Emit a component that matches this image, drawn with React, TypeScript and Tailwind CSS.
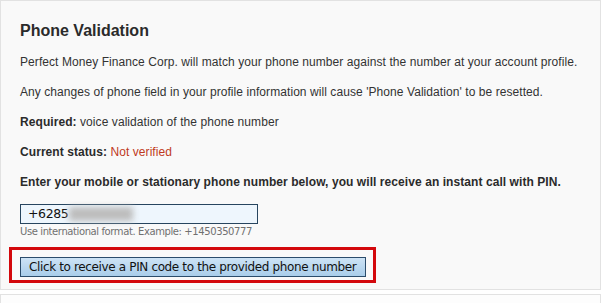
import React from "react";

export default function App() {
  return (
    <div className="w-[603px] h-[303px] bg-white overflow-hidden">
      <div className="w-[601px] h-[290px] bg-[#f9f9f9] border border-[#e2e2e2] pl-[19px] pt-[21px] font-['Liberation_Sans',Arial,sans-serif] text-[#333]">
        <h1 className="text-[16px] leading-[18px] font-bold text-[#2b2b2b]">Phone Validation</h1>
        <div className="mt-[15px] flex flex-col gap-[15px] text-[12px] leading-[15px] tracking-[0.07px]">
          <p>Perfect Money Finance Corp. will match your phone number against the number at your account profile.</p>
          <p>Any changes of phone field in your profile information will cause 'Phone Validation' to be resetted.</p>
          <p>
            <b className="text-[#2b2b2b]">Required:</b> voice validation of the phone number
          </p>
          <p>
            <b className="text-[#2b2b2b]">Current status:</b> <span className="text-[#c0391e]">Not verified</span>
          </p>
          <p className="font-bold text-[#2b2b2b]">
            Enter your mobile or stationary phone number below, you will receive an instant call with PIN.
          </p>
        </div>
        <div className="mt-[14px] w-[238px] h-[20px] border border-[#27455f] bg-[#eef6fd] flex items-center pl-[7px] font-['DejaVu_Sans',Tahoma,sans-serif] text-[12.5px] tracking-[-0.4px] text-[#111]">
          <span>+6285</span>
          <span className="ml-[1px] w-[64px] h-[14px] bg-[#bdbdbd] blur-[3px]" />
        </div>
        <div className="mt-[2px] font-['DejaVu_Sans',Tahoma,sans-serif] text-[10px] leading-[12px] tracking-[-0.4px] text-[#707070]">
          Use international format. Example: +1450350777
        </div>
        <div className="mt-[9px] -ml-[11px] w-[367px] h-[36px] border-[3px] border-[#d3080c] pt-[4px] pl-[8px]">
          <button className="w-[346px] h-[20px] border border-[#2b4c6b] bg-gradient-to-b from-[#cde3f5] to-[#a9cdea] text-left pl-[8px] whitespace-nowrap font-['DejaVu_Sans',Tahoma,sans-serif] text-[12px] tracking-[-0.36px] leading-[18px] text-[#111]">
            Click to receive a PIN code to the provided phone number
          </button>
        </div>
      </div>
      <div className="mt-[4px] w-[601px] h-[20px] border-t border-l border-r border-[#e2e2e2] bg-[#fdfdfd]" />
    </div>
  );
}
